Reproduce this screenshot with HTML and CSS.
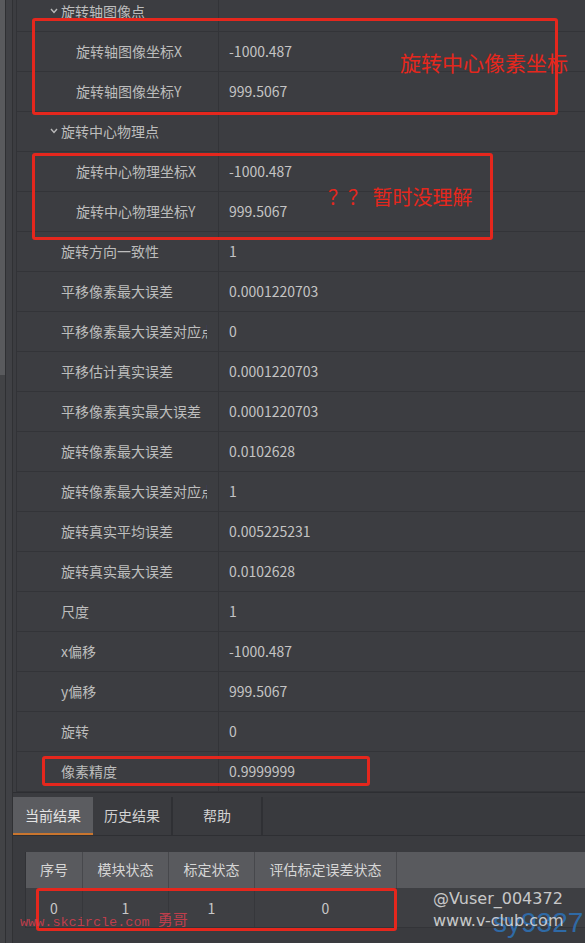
FILE: index.html
```html
<!DOCTYPE html>
<html lang="zh-CN">
<head>
<meta charset="utf-8">
<title>标定结果</title>
<link rel="stylesheet" href="styles.css">
</head>
<body>
<div class="app">
  <div class="scroll"><div class="thumb"></div></div>
  <div class="gutter"></div>
  <div class="main">
    <div class="grid">
      <div class="row group"><div class="k"><svg class="chev" viewBox="0 0 8 6" width="8" height="6"><path d="M1 1 L4 4.5 L7 1" fill="none" stroke="#b9b9b9" stroke-width="1.4"/></svg>旋转轴图像点</div><div class="v"></div></div>
      <div class="row sub"><div class="k">旋转轴图像坐标X</div><div class="v">-1000.487</div></div>
      <div class="row sub"><div class="k">旋转轴图像坐标Y</div><div class="v">999.5067</div></div>
      <div class="row group"><div class="k"><svg class="chev" viewBox="0 0 8 6" width="8" height="6"><path d="M1 1 L4 4.5 L7 1" fill="none" stroke="#b9b9b9" stroke-width="1.4"/></svg>旋转中心物理点</div><div class="v"></div></div>
      <div class="row sub"><div class="k">旋转中心物理坐标X</div><div class="v">-1000.487</div></div>
      <div class="row sub"><div class="k">旋转中心物理坐标Y</div><div class="v">999.5067</div></div>
      <div class="row"><div class="k">旋转方向一致性</div><div class="v">1</div></div>
      <div class="row"><div class="k">平移像素最大误差</div><div class="v">0.0001220703</div></div>
      <div class="row"><div class="k">平移像素最大误差对应点</div><div class="v">0</div></div>
      <div class="row"><div class="k">平移估计真实误差</div><div class="v">0.0001220703</div></div>
      <div class="row"><div class="k">平移像素真实最大误差</div><div class="v">0.0001220703</div></div>
      <div class="row"><div class="k">旋转像素最大误差</div><div class="v">0.0102628</div></div>
      <div class="row"><div class="k">旋转像素最大误差对应点</div><div class="v">1</div></div>
      <div class="row"><div class="k">旋转真实平均误差</div><div class="v">0.005225231</div></div>
      <div class="row"><div class="k">旋转真实最大误差</div><div class="v">0.0102628</div></div>
      <div class="row"><div class="k">尺度</div><div class="v">1</div></div>
      <div class="row"><div class="k">x偏移</div><div class="v">-1000.487</div></div>
      <div class="row"><div class="k">y偏移</div><div class="v">999.5067</div></div>
      <div class="row"><div class="k">旋转</div><div class="v">0</div></div>
      <div class="row"><div class="k">像素精度</div><div class="v">0.9999999</div></div>
    </div>
    <div class="sep"></div>
    <div class="tabs">
      <div class="tab active">当前结果</div>
      <div class="tab">历史结果</div>
      <div class="tab help">帮助</div>
    </div>
    <div class="results">
      <div class="table">
        <div class="tr th">
          <div class="c c1">序号</div>
          <div class="c c2">模块状态</div>
          <div class="c c3">标定状态</div>
          <div class="c c4">评估标定误差状态</div>
          <div class="c fill"></div>
        </div>
        <div class="tr td">
          <div class="c c1">0</div>
          <div class="c c2">1</div>
          <div class="c c3">1</div>
          <div class="c c4">0</div>
          <div class="c fill"></div>
        </div>
      </div>
    </div>
  </div>

  <div class="mark box1"></div>
  <div class="mark box2"></div>
  <div class="mark box3"></div>
  <div class="mark box4"></div>
  <div class="note note1">旋转中心像素坐标</div>
  <div class="note note2">？？ 暂时没理解</div>

  <div class="wm-sk">www.skcircle.com <span class="yg">勇哥</span></div>
  <div class="wm-sy">sy9327</div>
  <div class="wm-user">@Vuser_004372</div>
  <div class="wm-club">www.v-club.com</div>
</div>
</body>
</html>
```

FILE: styles.css
```css
* { box-sizing: border-box; }
html, body { margin: 0; padding: 0; }
body {
  background: #3c3d41;
  font-family: "Noto Sans CJK SC", "Noto Sans", sans-serif;
  font-size: 14px;
  color: #c2c2c2;
  overflow: hidden;
}
.app {
  position: relative;
  width: 585px;
  height: 943px;
  display: flex;
  overflow: hidden;
}
.scroll {
  width: 6px;
  flex: none;
  background: #424346;
  border-right: 1px solid #2f3033;
}
.thumb {
  height: 375px;
  background: #595a5d;
}
.gutter {
  width: 7px;
  flex: none;
  background: #404145;
  border-right: 1px solid #303134;
}
.main {
  flex: 1;
  display: flex;
  flex-direction: column;
  min-width: 0;
}
.grid {
  margin-top: -8px;
  margin-left: 3px;
  border-left: 1px solid #323337;
  background: #3c3d41;
}
.row {
  display: flex;
  height: 40px;
  border-bottom: 1px solid #333438;
  line-height: 39px;
}
.k {
  width: 190px;
  flex: none;
  padding-left: 44px;
  white-space: nowrap;
  overflow: hidden;
  color: #bdbdbd;
}
.row.sub .k { padding-left: 59px; }
.row.group .k { padding-left: 33px; display: flex; align-items: center; gap: 3px; }
.chev { flex: none; margin-top: -2px; }
.v {
  flex: 1;
  margin-left: 11px;
  border-left: 1px solid #333438;
  padding-left: 10px;
  color: #c4c4c4;
  white-space: nowrap;
}
.sep {
  height: 5px;
  border-top: 1px solid #2d2e32;
  background: #3a3b3f;
}
.tabs {
  display: flex;
  height: 39px;
  background: #393a3e;
  border-bottom: 1px solid #2e2f33;
}
.tab {
  width: 80px;
  height: 38px;
  line-height: 37px;
  text-align: center;
  color: #d2d2d2;
  background: #3a3b3f;
  border-right: 2px solid #2f3034;
}
.tab.active {
  background: #5b5c60;
  border-right: none;
  border-bottom: 2px solid #c9752e;
  line-height: 36px;
  color: #e4e4e4;
}
.tab.help { width: 90px; }
.results {
  flex: 1;
  background: #3a3b3f;
  padding-top: 16px;
  padding-left: 12px;
}
.table {
  border-left: 1px solid #313236;
}
.tr { display: flex; }
.th {
  height: 36px;
  line-height: 35px;
  background: #595a5e;
  color: #d6d6d6;
}
.td {
  height: 40px;
  line-height: 40px;
  background: #3e3f43;
  color: #c8c8c8;
  border-bottom: 1px solid #333438;
}
.c {
  text-align: center;
  border-right: 1px solid #47484c;
  flex: none;
}
.td .c { border-right-color: #36373b; }
.c1 { width: 57px; }
.c2 { width: 86px; }
.c3 { width: 86px; }
.c4 { width: 142px; }
.c.fill { flex: 1; border-right: none; }

/* red annotations drawn over the screenshot */
.mark {
  position: absolute;
  border: 3px solid #e5271d;
  border-radius: 3px;
}
.box1 { left: 32px; top: 18px; width: 526px; height: 97px; }
.box2 { left: 32px; top: 153px; width: 461px; height: 87px; }
.box3 { left: 42px; top: 756px; width: 328px; height: 30px; }
.box4 { left: 36px; top: 888px; width: 361px; height: 43px; }
.note {
  position: absolute;
  color: #e5271d;
  line-height: 1;
  white-space: nowrap;
}
.note1 { left: 400px; top: 52px; font-size: 21px; }
.note2 { left: 328px; top: 187px; font-size: 20px; }

/* watermarks */
.wm-sk {
  position: absolute;
  left: 20px;
  top: 912px;
  font-family: "Liberation Mono", monospace;
  font-size: 13.5px;
  line-height: 1;
  color: rgba(214, 62, 78, 0.85);
  white-space: nowrap;
}
.wm-sk .yg {
  font-family: "Noto Sans CJK SC", sans-serif;
  font-size: 15px;
  position: relative;
  top: -1px;
}
.wm-sy {
  position: absolute;
  left: 493px;
  top: 909px;
  font-family: "Liberation Sans", Arial, sans-serif;
  font-size: 28px;
  line-height: 1;
  color: #2f6aa6;
  white-space: nowrap;
}
.wm-user, .wm-club {
  position: absolute;
  left: 433px;
  font-family: "DejaVu Sans", sans-serif;
  font-size: 16px;
  line-height: 1;
  color: rgba(226, 226, 226, 0.85);
  white-space: nowrap;
}
.wm-user { top: 891px; }
.wm-club { top: 913px; }
```
